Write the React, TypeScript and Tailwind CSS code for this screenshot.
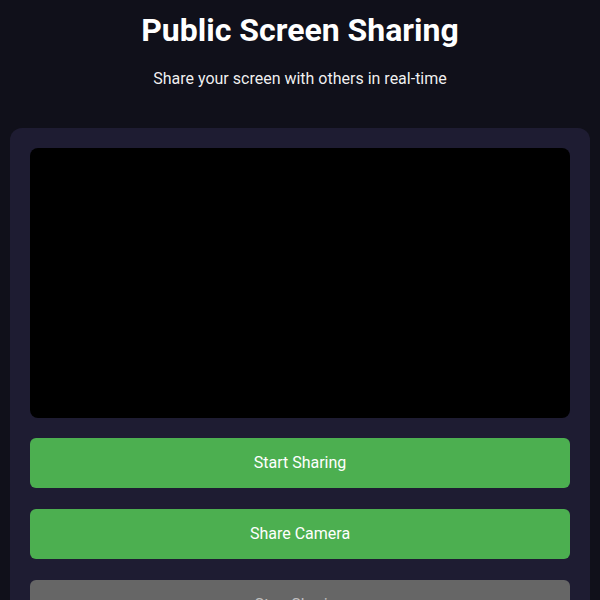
const buttons = [
  { label: "Start Sharing", className: "bg-[#4caf50] text-white" },
  { label: "Share Camera", className: "bg-[#4caf50] text-white" },
  { label: "Stop Sharing", className: "bg-[#666666] text-white/60" },
];

export default function App() {
  return (
    <div className="min-h-screen bg-[#10101a] px-[10px] pb-10 font-['Roboto',sans-serif] text-white">
      <header className="pt-[10px] text-center">
        <h1 className="text-[32px] font-bold leading-[40px]">Public Screen Sharing</h1>
        <p className="mt-[19px] text-base leading-5 text-white/95">
          Share your screen with others in real-time
        </p>
      </header>

      <main className="mt-[39px] rounded-xl bg-[#1e1c32] p-5">
        <div className="h-[270px] w-full rounded-lg bg-black" />
        <div className="mt-[20px] flex flex-col gap-[21px]">
          {buttons.map((b) => (
            <button
              key={b.label}
              className={`h-[50px] w-full rounded-md text-base ${b.className}`}
            >
              {b.label}
            </button>
          ))}
        </div>
      </main>
    </div>
  );
}
